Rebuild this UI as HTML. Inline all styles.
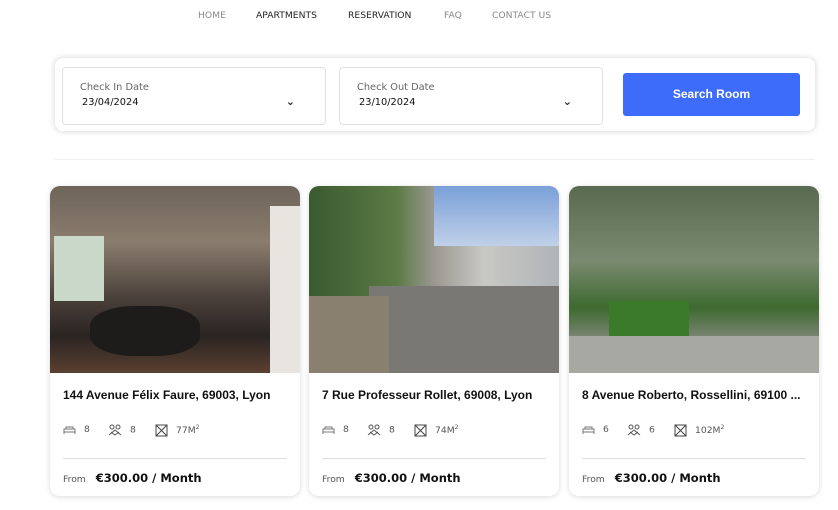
<!DOCTYPE html>
<html><head><meta charset="utf-8"><style>
*{margin:0;padding:0;box-sizing:border-box}
body{width:838px;height:510px;background:#fff;font-family:"DejaVu Sans","Liberation Sans",sans-serif;position:relative;overflow:hidden}
.nav{position:absolute;top:10px;font-size:9.2px;color:#888;letter-spacing:0}
.nav.d{color:#222}
.sb{position:absolute;left:55px;top:58px;width:760px;height:73px;border-radius:8px;box-shadow:0 0 7px rgba(0,0,0,.18);background:#fff}
.in{position:absolute;top:67px;height:58px;width:264px;border:1px solid #e0e0e0;border-radius:4px;background:#fff}
.in .l{position:absolute;left:17px;top:14px;font-size:9.8px;color:#666}
.in .v{position:absolute;left:19px;top:29px;font-size:9.8px;color:#111}
.in .c{position:absolute;right:30px;top:27px;font-size:11px;font-weight:bold;color:#222}
.btn{position:absolute;left:623px;top:73px;width:177px;height:43px;background:#3d6bfa;border-radius:3px;color:#fff;font-family:"Liberation Sans",sans-serif;font-size:12px;font-weight:bold;text-align:center;line-height:43px}
.hr{position:absolute;left:55px;top:159px;width:760px;height:1px;background:#eee}
.card{position:absolute;top:186px;width:250px;height:310px;border-radius:10px;box-shadow:0 1px 6px rgba(0,0,0,.15);overflow:hidden;background:#fff}
.img{height:187px}
.t{position:absolute;left:13px;top:202px;font-family:"Liberation Sans",sans-serif;font-weight:bold;font-size:12px;color:#111;white-space:nowrap}
.f{position:absolute;top:238px;font-size:9.2px;color:#555}
.f svg{vertical-align:middle;margin-right:8px}
.line{position:absolute;left:13px;right:13px;top:272px;height:1px;background:#ddd}
.p{position:absolute;left:13px;top:285px;font-size:9.2px;color:#555}
.p b{font-size:11.5px;color:#111;margin-left:10px}
</style></head><body>
<div class="nav" style="left:198px">HOME</div>
<div class="nav d" style="left:256px">APARTMENTS</div>
<div class="nav d" style="left:348px">RESERVATION</div>
<div class="nav" style="left:444px">FAQ</div>
<div class="nav" style="left:492px">CONTACT US</div>
<div class="sb"></div>
<div class="in" style="left:62px"><div class="l">Check In Date</div><div class="v">23/04/2024</div><div class="c">⌄</div></div>
<div class="in" style="left:339px"><div class="l">Check Out Date</div><div class="v">23/10/2024</div><div class="c">⌄</div></div>
<div class="btn">Search Room</div>
<div class="hr"></div>

<div class="card" style="left:50px">
<div class="img" style="background:linear-gradient(180deg,#6e645a 0%,#8a7d6e 30%,#4a403a 60%,#2a2422 80%,#5a4030 100%)"><div style="position:absolute;left:4px;top:50px;width:50px;height:65px;background:#c9d8c8"></div><div style="position:absolute;left:40px;top:120px;width:110px;height:50px;background:#1e1b1b;border-radius:40%"></div><div style="position:absolute;right:0;top:20px;width:30px;height:167px;background:#e8e4e0"></div></div>
<div class="t">144 Avenue Félix Faure, 69003, Lyon</div>
<div class="f" style="left:13px"><svg width="13" height="10"><path d="M1 9V4h11v5M1 7h11M3 4V2h7v2" stroke="#777" fill="none"/></svg>8</div>
<div class="f" style="left:58px"><svg width="14" height="12"><circle cx="4" cy="3" r="2" stroke="#555" fill="none"/><circle cx="10" cy="3" r="2" stroke="#555" fill="none"/><path d="M1 11l6-5 6 5M3 8l4 3 4-3" stroke="#555" fill="none"/></svg>8</div>
<div class="f" style="left:105px"><svg width="13" height="13"><rect x="1" y="1" width="11" height="11" stroke="#444" fill="none"/><path d="M1 1l11 11M12 1L1 12" stroke="#444"/></svg>77M<sup style="font-size:6px">2</sup></div>
<div class="line"></div><div class="p">From<b>€300.00 / Month</b></div>
</div>

<div class="card" style="left:309px">
<div class="img" style="background:linear-gradient(90deg,#3a5a30 0%,#5c7a45 35%,#9a9890 50%,#c8c8c4 70%,#b0b4b8 100%)"><div style="position:absolute;left:125px;top:0;width:125px;height:60px;background:linear-gradient(#7aa0d8,#c0d0e8)"></div><div style="position:absolute;left:60px;top:100px;width:190px;height:87px;background:#7a7874"></div><div style="position:absolute;left:0;top:110px;width:80px;height:77px;background:#8a8070"></div></div>
<div class="t">7 Rue Professeur Rollet, 69008, Lyon</div>
<div class="f" style="left:13px"><svg width="13" height="10"><path d="M1 9V4h11v5M1 7h11M3 4V2h7v2" stroke="#777" fill="none"/></svg>8</div>
<div class="f" style="left:58px"><svg width="14" height="12"><circle cx="4" cy="3" r="2" stroke="#555" fill="none"/><circle cx="10" cy="3" r="2" stroke="#555" fill="none"/><path d="M1 11l6-5 6 5M3 8l4 3 4-3" stroke="#555" fill="none"/></svg>8</div>
<div class="f" style="left:105px"><svg width="13" height="13"><rect x="1" y="1" width="11" height="11" stroke="#444" fill="none"/><path d="M1 1l11 11M12 1L1 12" stroke="#444"/></svg>74M<sup style="font-size:6px">2</sup></div>
<div class="line"></div><div class="p">From<b>€300.00 / Month</b></div>
</div>

<div class="card" style="left:569px">
<div class="img" style="background:linear-gradient(180deg,#5a6a50 0%,#7a8a70 40%,#3e6a30 65%,#8a8a84 85%,#6a6a66 100%)"><div style="position:absolute;left:40px;top:115px;width:80px;height:45px;background:#3a7a2a"></div><div style="position:absolute;left:0;top:150px;width:250px;height:37px;background:#a8a8a2"></div></div>
<div class="t">8 Avenue Roberto, Rossellini, 69100 ...</div>
<div class="f" style="left:13px"><svg width="13" height="10"><path d="M1 9V4h11v5M1 7h11M3 4V2h7v2" stroke="#777" fill="none"/></svg>6</div>
<div class="f" style="left:58px"><svg width="14" height="12"><circle cx="4" cy="3" r="2" stroke="#555" fill="none"/><circle cx="10" cy="3" r="2" stroke="#555" fill="none"/><path d="M1 11l6-5 6 5M3 8l4 3 4-3" stroke="#555" fill="none"/></svg>6</div>
<div class="f" style="left:105px"><svg width="13" height="13"><rect x="1" y="1" width="11" height="11" stroke="#444" fill="none"/><path d="M1 1l11 11M12 1L1 12" stroke="#444"/></svg>102M<sup style="font-size:6px">2</sup></div>
<div class="line"></div><div class="p">From<b>€300.00 / Month</b></div>
</div>
</body></html>
